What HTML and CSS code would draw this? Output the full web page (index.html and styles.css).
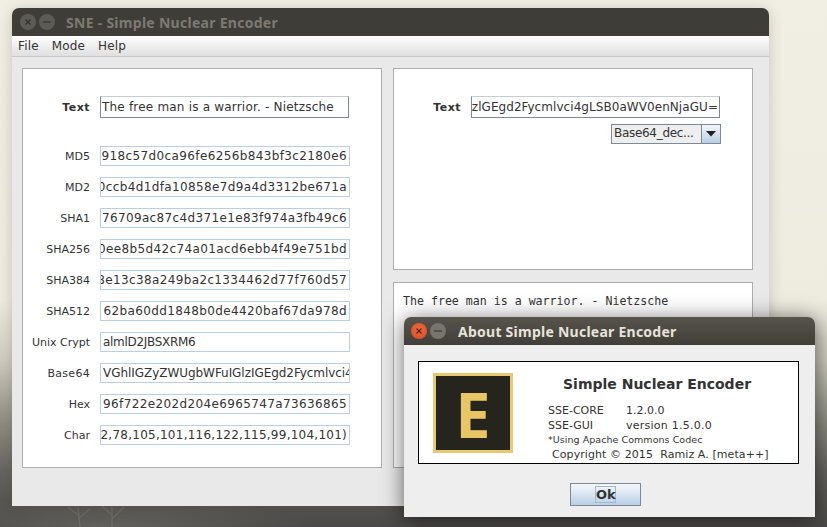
FILE: index.html
```html
<!DOCTYPE html>
<html lang="en">
<head>
<meta charset="utf-8">
<title>SNE - Simple Nuclear Encoder</title>
<link rel="stylesheet" href="styles.css">
</head>
<body>
<svg class="trees" viewBox="0 0 827 22" aria-hidden="true">
  <g fill="none" stroke="#8a877e" stroke-width="1.2">
    <path d="M112 22V2M112 10L102 1M112 14L124 2M80 22L78 2M78 10L68 2M78 14L90 4"/>
  </g>
</svg>

<section class="window main-window">
  <header class="titlebar">
    <span class="win-btn btn-dim"><svg viewBox="0 0 16 16"><path d="M5.5 5.5l5 5M10.5 5.5l-5 5"/></svg></span>
    <span class="win-btn btn-dim"><svg viewBox="0 0 16 16"><path d="M4 8h8"/></svg></span>
    <h1 class="title title-dim">SNE - Simple Nuclear Encoder</h1>
  </header>
  <nav class="menubar"><span>File</span><span>Mode</span><span>Help</span></nav>
  <div class="content">
    <div class="panel left-panel">
      <div class="row text-row">
        <label class="label label-bold">Text</label>
        <div class="field field-input field-sentence">The free man is a warrior. - Nietzsche</div>
      </div>
      <div class="row"><label class="label">MD5</label><div class="field clip hex"><span>918c57d0ca96fe6256b843bf3c2180e6</span></div></div>
      <div class="row"><label class="label">MD2</label><div class="field clip hex"><span>0ccb4d1dfa10858e7d9a4d3312be671a</span></div></div>
      <div class="row"><label class="label">SHA1</label><div class="field clip hex"><span>76709ac87c4d371e1e83f974a3fb49c6</span></div></div>
      <div class="row"><label class="label">SHA256</label><div class="field clip hex"><span>0ee8b5d42c74a01acd6ebb4f49e751bd</span></div></div>
      <div class="row"><label class="label">SHA384</label><div class="field clip hex"><span>8e13c38a249ba2c1334462d77f760d57</span></div></div>
      <div class="row"><label class="label">SHA512</label><div class="field clip hex"><span>62ba60dd1848b0de4420baf67da978d</span></div></div>
      <div class="row"><label class="label">Unix Crypt</label><div class="field crypt">almlD2JBSXRM6</div></div>
      <div class="row"><label class="label label-wide">Base64</label><div class="field b64-left">VGhlIGZyZWUgbWFuIGlzIGEgd2Fycmlvci4</div></div>
      <div class="row"><label class="label">Hex</label><div class="field clip hex"><span>96f722e202d204e6965747a73636865</span></div></div>
      <div class="row"><label class="label">Char</label><div class="field clip chars"><span>32,78,105,101,116,122,115,99,104,101)</span></div></div>
    </div>
    <div class="right-col">
      <div class="panel decode-panel">
        <div class="decode-row">
          <label class="label-bold">Text</label>
          <div class="field field-input clip b64"><span>zlGEgd2Fycmlvci4gLSB0aWV0enNjaGU=</span></div>
        </div>
        <div class="combo">
          <span class="combo-value">Base64_dec...</span>
          <span class="combo-arrow"><svg viewBox="0 0 10 6"><path d="M0 0h10L5 5.5z"/></svg></span>
        </div>
      </div>
      <div class="panel output-panel">The free man is a warrior. - Nietzsche</div>
    </div>
  </div>
</section>

<section class="window about-window">
  <header class="titlebar titlebar-about">
    <span class="win-btn btn-close"><svg viewBox="0 0 16 16"><path d="M5.5 5.5l5 5M10.5 5.5l-5 5"/></svg></span>
    <span class="win-btn btn-min"><svg viewBox="0 0 16 16"><path d="M4 8h8"/></svg></span>
    <h2 class="title title-about">About Simple Nuclear Encoder</h2>
  </header>
  <div class="about-body">
    <div class="about-box">
      <div class="logo"><span>E</span></div>
      <div class="about-info">
        <h3 class="about-name">Simple Nuclear Encoder</h3>
        <div class="version-row"><span>SSE-CORE</span><span>1.2.0.0</span></div>
        <div class="version-row"><span>SSE-GUI</span><span class="version-gui">version 1.5.0.0</span></div>
        <div class="about-note">*Using Apache Commons Codec</div>
        <div class="about-copy">Copyright © 2015&nbsp; Ramiz A. [meta++]</div>
      </div>
    </div>
    <div class="about-actions"><button class="ok-btn" type="button"><span>Ok</span></button></div>
  </div>
</section>
</body>
</html>
```

FILE: styles.css
```css
* { box-sizing: border-box; }
html, body { margin: 0; height: 100%; }
body {
  position: relative;
  overflow: hidden;
  font-family: "DejaVu Sans", sans-serif;
  color: #333;
  background:
    radial-gradient(ellipse 200px 30px at 110px 527px, rgba(130,127,118,.4), rgba(130,127,118,0)),
    linear-gradient(180deg, #f1eee4 0, #eeebdf 300px, #cfcdbf 360px, #908f83 420px, #666560 470px, #4a4947 527px);
}
.trees { position: absolute; left: 0; bottom: 0; width: 827px; height: 22px; opacity: .35; }

.window { position: absolute; display: flex; flex-direction: column; }
.main-window {
  left: 12px; top: 8px; width: 757px; height: 498px;
  background: #e9e9e9;
  border-radius: 7px 7px 0 0;
  box-shadow: 0 2px 14px rgba(60,55,40,.22);
}
.about-window {
  left: 404px; top: 317px; width: 411px; height: 200px;
  background: #eeeeee;
  border-radius: 7px 7px 0 0;
  box-shadow: 0 3px 22px rgba(0,0,0,.6);
}

.titlebar {
  flex: none; height: 28px; display: flex; align-items: center;
  padding-left: 8px; gap: 3px;
  background: #3f3d38;
  border-radius: 7px 7px 0 0;
}
.titlebar-about { padding-left: 7px; background: linear-gradient(180deg, #57544c, #403e38); }
.win-btn { flex: none; width: 16px; height: 16px; border-radius: 50%; display: block; }
.win-btn svg { display: block; width: 16px; height: 16px; fill: none; stroke-width: 1.2; }
.btn-dim { background: #5d5b56; }
.btn-dim svg { stroke: #34322e; }
.btn-close { background: radial-gradient(circle at 50% 40%, #ee6c3e, #d24a22); }
.btn-close svg { stroke: #5b1d0a; }
.btn-min { background: #77756e; }
.btn-min svg { stroke: #3a3833; }
.title { margin: 0 0 0 8px; font: 700 14px "Noto Sans", sans-serif; white-space: nowrap; letter-spacing: .28px; }
.title-dim { color: #7c7a72; }
.title-about { margin-left: 9px; color: #e6e3da; letter-spacing: .25px; }

.menubar {
  flex: none; height: 21px; display: flex; gap: 13px; align-items: center;
  padding: 0 0 1px 6px;
  font-size: 12px;
  letter-spacing: .15px;
  background: linear-gradient(180deg, #ffffff, #dfdfdf);
  border-bottom: 1px solid #c8c8c8;
}

.content {
  flex: 1; display: grid; grid-template-columns: 360px 360px; column-gap: 11px;
  align-items: start;
  padding: 11px 0 0 10px;
}
.panel { background: #fff; border: 1px solid #adadad; }
.left-panel {
  height: 400px; padding-top: 27px;
  display: flex; flex-direction: column; gap: 11px;
}
.row { display: flex; align-items: center; gap: 10px; height: 20px; }
.text-row { height: 22px; margin-bottom: 17px; }
.label { flex: none; width: 67px; text-align: right; font-size: 11px; }
.label-wide { letter-spacing: .3px; }
.label-bold { font-size: 11px; font-weight: 700; letter-spacing: .5px; }
.field {
  flex: none; width: 250px; height: 20px; line-height: 18px;
  padding: 0 2px;
  font-size: 12px; white-space: nowrap; overflow: hidden;
  border: 1px solid #b8cfe5; background: #fff;
}
.clip { display: flex; justify-content: flex-end; }
.clip span { flex: none; }
.hex { letter-spacing: .37px; }
.chars { letter-spacing: .25px; }
.crypt { letter-spacing: -.3px; }
.b64 { letter-spacing: .06px; }
.b64-left { letter-spacing: -.05px; }
.field-sentence { letter-spacing: .2px; }
.field-input {
  height: 22px; line-height: 20px; width: 249px;
  border-color: #c6ccd2 #7a8a99 #7a8a99 #7a8a99;
  padding: 0 1px;
}
.right-col { display: flex; flex-direction: column; gap: 12px; }
.decode-panel {
  height: 202px; padding: 27px 31px 0 0;
  display: flex; flex-direction: column; align-items: flex-end; gap: 6px;
}
.decode-row { display: flex; align-items: center; gap: 10px; margin-right: 1px; }
.combo {
  width: 110px; height: 20px; display: flex;
  border: 1px solid #7a8a99; background: #eeeeee; font-size: 12px;
}
.combo-value { flex: 1; padding-left: 2px; line-height: 17px; white-space: nowrap; overflow: hidden; letter-spacing: -.3px; }
.combo-arrow {
  flex: none; width: 19px; display: flex; align-items: center; justify-content: center;
  border-left: 1px solid #7a8a99;
  background: linear-gradient(180deg, #f2f6fa, #b8cfe5);
}
.combo-arrow svg { width: 10px; height: 6px; fill: #222; }
.output-panel {
  height: 186px; padding: 11px 9px;
  font: 11.6px/15px "DejaVu Sans Mono", monospace;
}

.about-body { flex: 1; display: flex; flex-direction: column; padding: 16px 16px 0 14px; }
.about-box {
  height: 103px; display: flex; gap: 35px;
  padding: 11px 0 0 14px;
  background: #fff; border: 1px solid #000;
}
.logo {
  flex: none; width: 80px; height: 80px;
  display: flex; align-items: center; justify-content: center;
  background: #25251d; border: 3px solid #e8c970;
  color: #e8c665;
  font: 700 63px/1 "Open Sans", sans-serif;
}
.about-info { flex: 1; font-size: 11px; }
.about-name { margin: 3px 0 10px 15px; font-size: 14px; line-height: 17px; font-weight: 700; white-space: nowrap; }
.version-row { display: flex; height: 15px; line-height: 15px; }
.version-row span:first-child { width: 78px; }
.version-gui { letter-spacing: .25px; }
.about-note { font-size: 9.5px; height: 14px; line-height: 13px; letter-spacing: .05px; }
.about-copy { margin-left: 4px; line-height: 16px; white-space: nowrap; letter-spacing: .08px; }
.about-actions { display: flex; justify-content: center; padding-top: 19px; padding-right: 6px; }
.ok-btn {
  width: 71px; height: 23px; padding: 0;
  display: flex; align-items: center; justify-content: center;
  font: 700 13px "DejaVu Sans", sans-serif; color: #333;
  border: 1px solid #7a8a99;
  background: linear-gradient(180deg, #f5f8fb 0, #dfe9f3 40%, #b8cfe5 100%);
}
.ok-btn span { display: block; width: 21px; height: 17px; line-height: 15px; border: 1px solid #a3b8cc; }
```
